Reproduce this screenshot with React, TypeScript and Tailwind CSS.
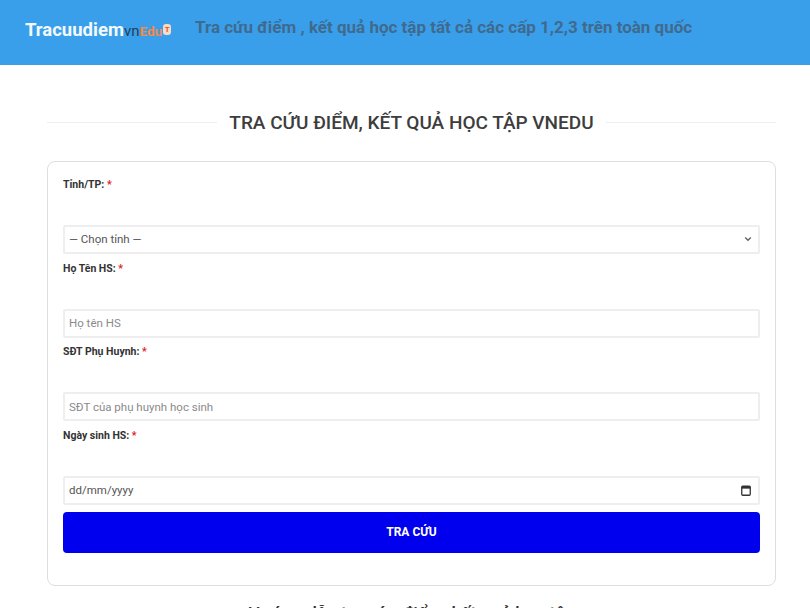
const fieldClass =
  'h-[29px] w-full rounded-[2px] border-2 border-[#eeeeee] bg-white px-[4px] text-[11.5px] text-[#555] placeholder:text-[#8a8a8a] outline-none'

function FieldLabel({ text }: { text: string }) {
  return (
    <div className="mb-[32px] h-[16px] text-[10.5px] leading-[16px] font-bold text-[#333]">
      {text} <span className="text-[#e02020]">*</span>
    </div>
  )
}

function Logo() {
  return (
    <div className="mt-[5px] flex w-[170px] shrink-0 items-baseline text-[18.5px] leading-none font-bold">
      <span className="text-[#f1f9fd]">Tracuudiem</span>
      <span className="text-[15px] font-normal text-[#1f3f5c]">vn</span>
      <span className="text-[13.5px] text-[#f08a4b]">Edu</span>
      <span className="relative -top-[4px] ml-[1px] flex h-[11px] w-[8px] items-center justify-center rounded-[3px] bg-[#f6dcc4] text-[8px] text-[#e4572e]">
        T
      </span>
    </div>
  )
}

export default function App() {
  return (
    <div className="h-[608px] w-[810px] overflow-hidden bg-white font-['Roboto',sans-serif]">
      {/* header */}
      <header className="flex h-[65px] items-center bg-[#3a9fea] pb-[10px] pl-[25px]">
        <Logo />
        <h1 className="text-[17px] font-bold text-[#3f6a8e]">
          Tra cứu điểm , kết quả học tập tất cả các cấp 1,2,3 trên toàn quốc
        </h1>
      </header>

      <main className="px-[47px] pr-[34px]">
        {/* tiêu đề */}
        <div className="flex h-[96px] items-center gap-[12px] pt-[19px]">
          <div className="h-px flex-1 bg-[#eeeeee]" />
          <h2 className="relative top-[1px] text-[19px] font-medium text-[#3d3d3d]">TRA CỨU ĐIỂM, KẾT QUẢ HỌC TẬP VNEDU</h2>
          <div className="h-px flex-1 bg-[#eeeeee]" />
        </div>

        {/* form */}
        <form className="flex h-[425px] flex-col rounded-[8px] border border-[#dedede] px-[15px] pt-[15px]">
          <FieldLabel text="Tỉnh/TP:" />
          <div className="relative mb-[6.67px]">
            <div className={`${fieldClass} flex items-center bg-[#f8f8f8]`}>— Chọn tỉnh —</div>
            <svg
              className="absolute top-[11px] right-[8px] h-[6px] w-[8px] text-[#666]"
              viewBox="0 0 10 7"
              fill="none"
              stroke="currentColor"
              strokeWidth="1.8"
            >
              <path d="M1.5 1.5 5 5l3.5-3.5" />
            </svg>
          </div>

          <FieldLabel text="Họ Tên HS:" />
          <input className={`${fieldClass} mb-[6.67px]`} placeholder="Họ tên HS" />

          <FieldLabel text="SĐT Phụ Huynh:" />
          <input className={`${fieldClass} mb-[6.67px]`} placeholder="SĐT của phụ huynh học sinh" />

          <FieldLabel text="Ngày sinh HS:" />
          <div className="relative mb-[7px]">
            <input className={fieldClass} defaultValue="dd/mm/yyyy" />
            <svg className="absolute top-[9px] right-[9px] h-[11px] w-[10px] text-[#333]" viewBox="0 0 10 11" fill="none">
              <rect x="0.75" y="1.25" width="8.5" height="9" rx="1" stroke="currentColor" strokeWidth="1.3" />
              <rect x="0.75" y="1.25" width="8.5" height="2.4" fill="currentColor" />
            </svg>
          </div>

          <button
            type="button"
            className="h-[41px] w-full rounded-[4px] bg-[#0000ee] text-[12px] font-bold text-white"
          >
            TRA CỨU
          </button>
        </form>

        <p className="mt-[18px] text-center text-[18px] leading-[20px] font-medium text-[#333]">
          Hướng dẫn tra cứu điểm, kết quả học tập
        </p>
      </main>
    </div>
  )
}
